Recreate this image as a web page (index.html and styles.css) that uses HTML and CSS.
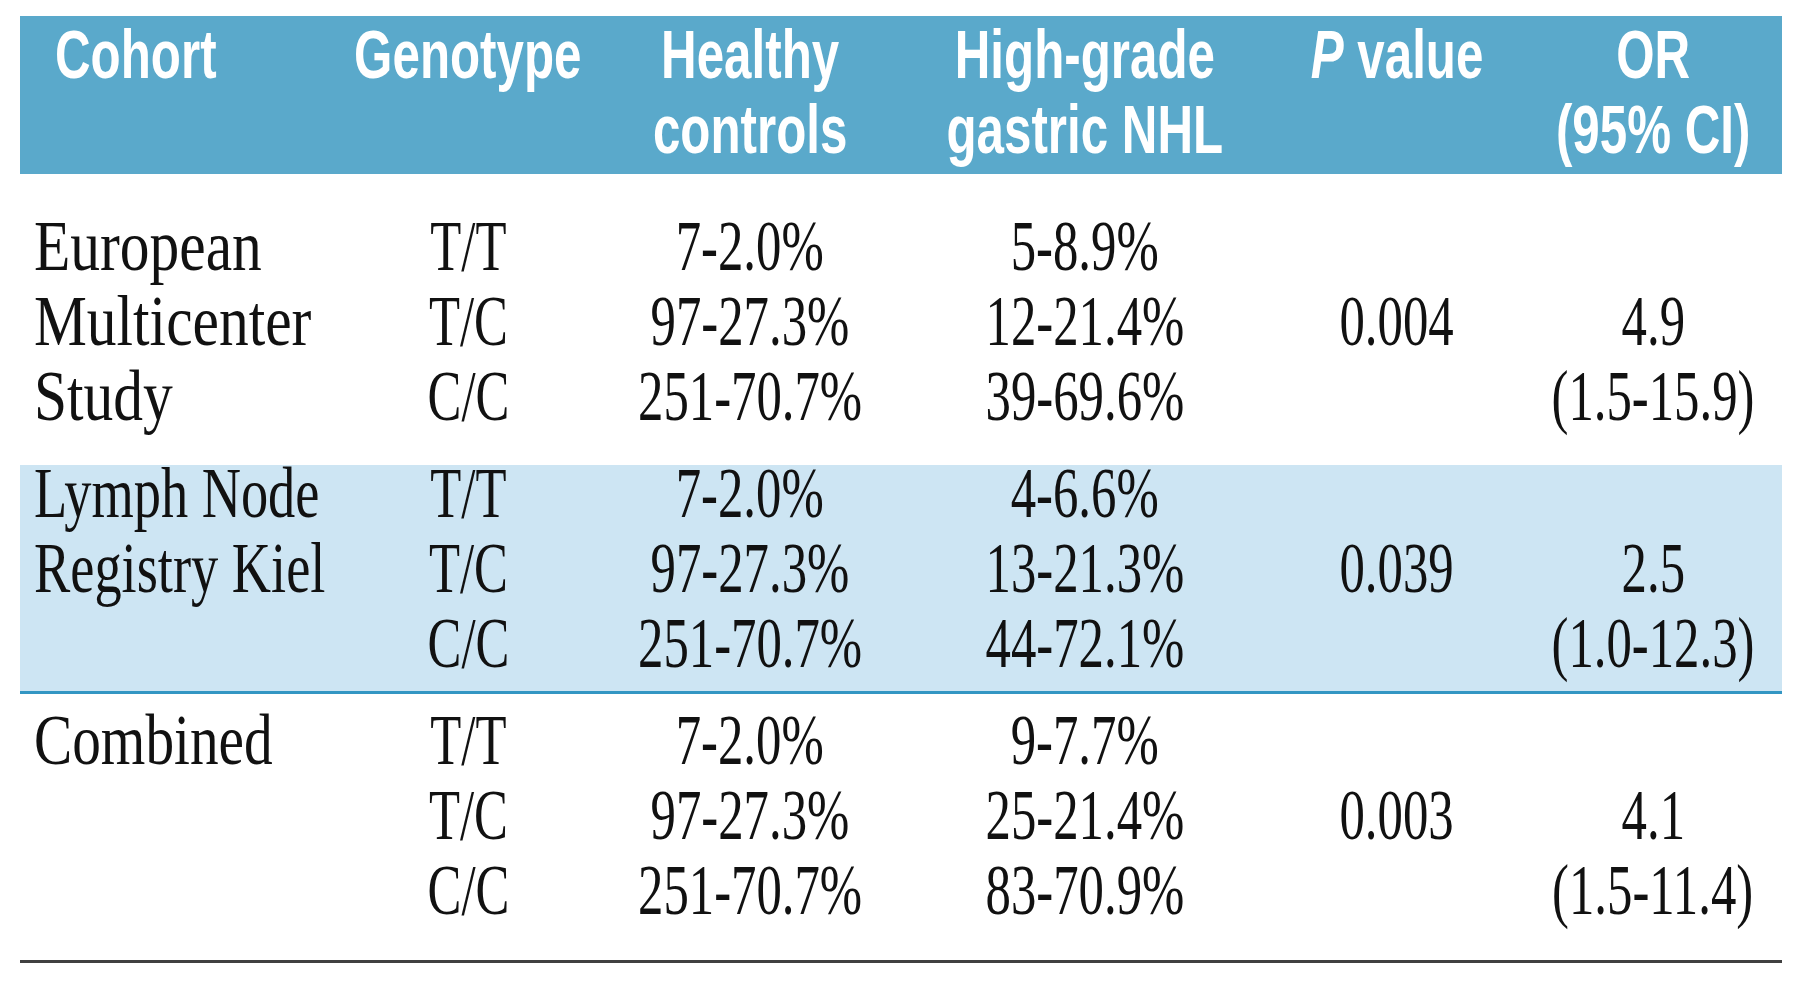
FILE: index.html
```html
<!DOCTYPE html>
<html>
<head>
<meta charset="utf-8">
<link rel="stylesheet" href="styles.css">
</head>
<body>
<div class="table">
  <div class="head">
    <div class="hc left"><span class="hs">Cohort</span></div>
    <div class="hc"><span class="hs">Genotype</span></div>
    <div class="hc"><span class="hs">Healthy<br>controls</span></div>
    <div class="hc"><span class="hs">High-grade<br>gastric NHL</span></div>
    <div class="hc"><span class="hs"><i>P</i> value</span></div>
    <div class="hc"><span class="hs">OR<br>(95% CI)</span></div>
  </div>

  <div class="group first">
    <div class="c name r1"><span class="nm wide">European</span></div>
    <div class="c name r2"><span class="nm wide">Multicenter</span></div>
    <div class="c name r3"><span class="nm wide">Study</span></div>
    <div class="c g r1"><span class="v">T/T</span></div>
    <div class="c g r2"><span class="v">T/C</span></div>
    <div class="c g r3"><span class="v">C/C</span></div>
    <div class="c h r1"><span class="v">7-2.0%</span></div>
    <div class="c h r2"><span class="v">97-27.3%</span></div>
    <div class="c h r3"><span class="v">251-70.7%</span></div>
    <div class="c n r1"><span class="v">5-8.9%</span></div>
    <div class="c n r2"><span class="v">12-21.4%</span></div>
    <div class="c n r3"><span class="v">39-69.6%</span></div>
    <div class="c p r2"><span class="v">0.004</span></div>
    <div class="c o r2"><span class="v">4.9</span></div>
    <div class="c o r3"><span class="v">(1.5-15.9)</span></div>
  </div>

  <div class="group band">
    <div class="c name r1"><span class="nm tight">Lymph Node</span></div>
    <div class="c name r2"><span class="nm tight">Registry Kiel</span></div>
    <div class="c g r1"><span class="v">T/T</span></div>
    <div class="c g r2"><span class="v">T/C</span></div>
    <div class="c g r3"><span class="v">C/C</span></div>
    <div class="c h r1"><span class="v">7-2.0%</span></div>
    <div class="c h r2"><span class="v">97-27.3%</span></div>
    <div class="c h r3"><span class="v">251-70.7%</span></div>
    <div class="c n r1"><span class="v">4-6.6%</span></div>
    <div class="c n r2"><span class="v">13-21.3%</span></div>
    <div class="c n r3"><span class="v">44-72.1%</span></div>
    <div class="c p r2"><span class="v">0.039</span></div>
    <div class="c o r2"><span class="v">2.5</span></div>
    <div class="c o r3"><span class="v">(1.0-12.3)</span></div>
  </div>

  <div class="group last">
    <div class="c name r1"><span class="nm">Combined</span></div>
    <div class="c g r1"><span class="v">T/T</span></div>
    <div class="c g r2"><span class="v">T/C</span></div>
    <div class="c g r3"><span class="v">C/C</span></div>
    <div class="c h r1"><span class="v">7-2.0%</span></div>
    <div class="c h r2"><span class="v">97-27.3%</span></div>
    <div class="c h r3"><span class="v">251-70.7%</span></div>
    <div class="c n r1"><span class="v">9-7.7%</span></div>
    <div class="c n r2"><span class="v">25-21.4%</span></div>
    <div class="c n r3"><span class="v">83-70.9%</span></div>
    <div class="c p r2"><span class="v">0.003</span></div>
    <div class="c o r2"><span class="v">4.1</span></div>
    <div class="c o r3"><span class="v">(1.5-11.4)</span></div>
  </div>
</div>
</body>
</html>
```
FILE: styles.css
```css
html, body {
  margin: 0;
  padding: 0;
  background: #ffffff;
}

.table {
  width: 1762px;
  margin: 16px 0 0 20px;
}

.head,
.group {
  display: grid;
  grid-template-columns: 316px 264px 300px 370px 254px 258px;
}

.head {
  background: #5aa9cb;
  padding: 1px 0 7px 0;
  color: #ffffff;
  font-family: "Liberation Sans", Arial, sans-serif;
  font-weight: bold;
  font-size: 68px;
  line-height: 75px;
}

.hc {
  display: flex;
  justify-content: center;
  align-items: flex-start;
  text-align: center;
  white-space: nowrap;
}

.hc.left {
  justify-content: flex-start;
  padding-left: 35px;
}

.hs {
  display: inline-block;
  transform: scaleX(0.725);
  transform-origin: center top;
}

.hc.left .hs {
  transform-origin: left top;
}

.group {
  grid-template-rows: 56px 56px 56px;
  row-gap: 19px;
  font-family: "Liberation Serif", "Times New Roman", serif;
  font-size: 72.5px;
  line-height: 56px;
  color: #111111;
}

.group.first {
  padding: 44px 0 41px 0;
}

.group.band {
  background: #cde5f3;
  padding: 0 0 20px 0;
  border-bottom: 3px solid #3396c3;
}

.group.last {
  padding: 18px 0 42px 0;
  border-bottom: 3px solid #404040;
}

.c {
  display: flex;
  justify-content: center;
  white-space: nowrap;
}

.r1 { grid-row: 1; }
.r2 { grid-row: 2; }
.r3 { grid-row: 3; }

.name { grid-column: 1; justify-content: flex-start; padding-left: 14px; }
.g { grid-column: 2; }
.h { grid-column: 3; }
.n { grid-column: 4; }
.p { grid-column: 5; }
.o { grid-column: 6; }

.v {
  display: inline-block;
  transform: scaleX(0.70);
  transform-origin: center;
}

.nm {
  display: inline-block;
  transform: scaleX(0.79);
  transform-origin: left center;
}

.nm.wide {
  transform: scaleX(0.82);
}

.nm.tight {
  transform: scaleX(0.75);
}
```
